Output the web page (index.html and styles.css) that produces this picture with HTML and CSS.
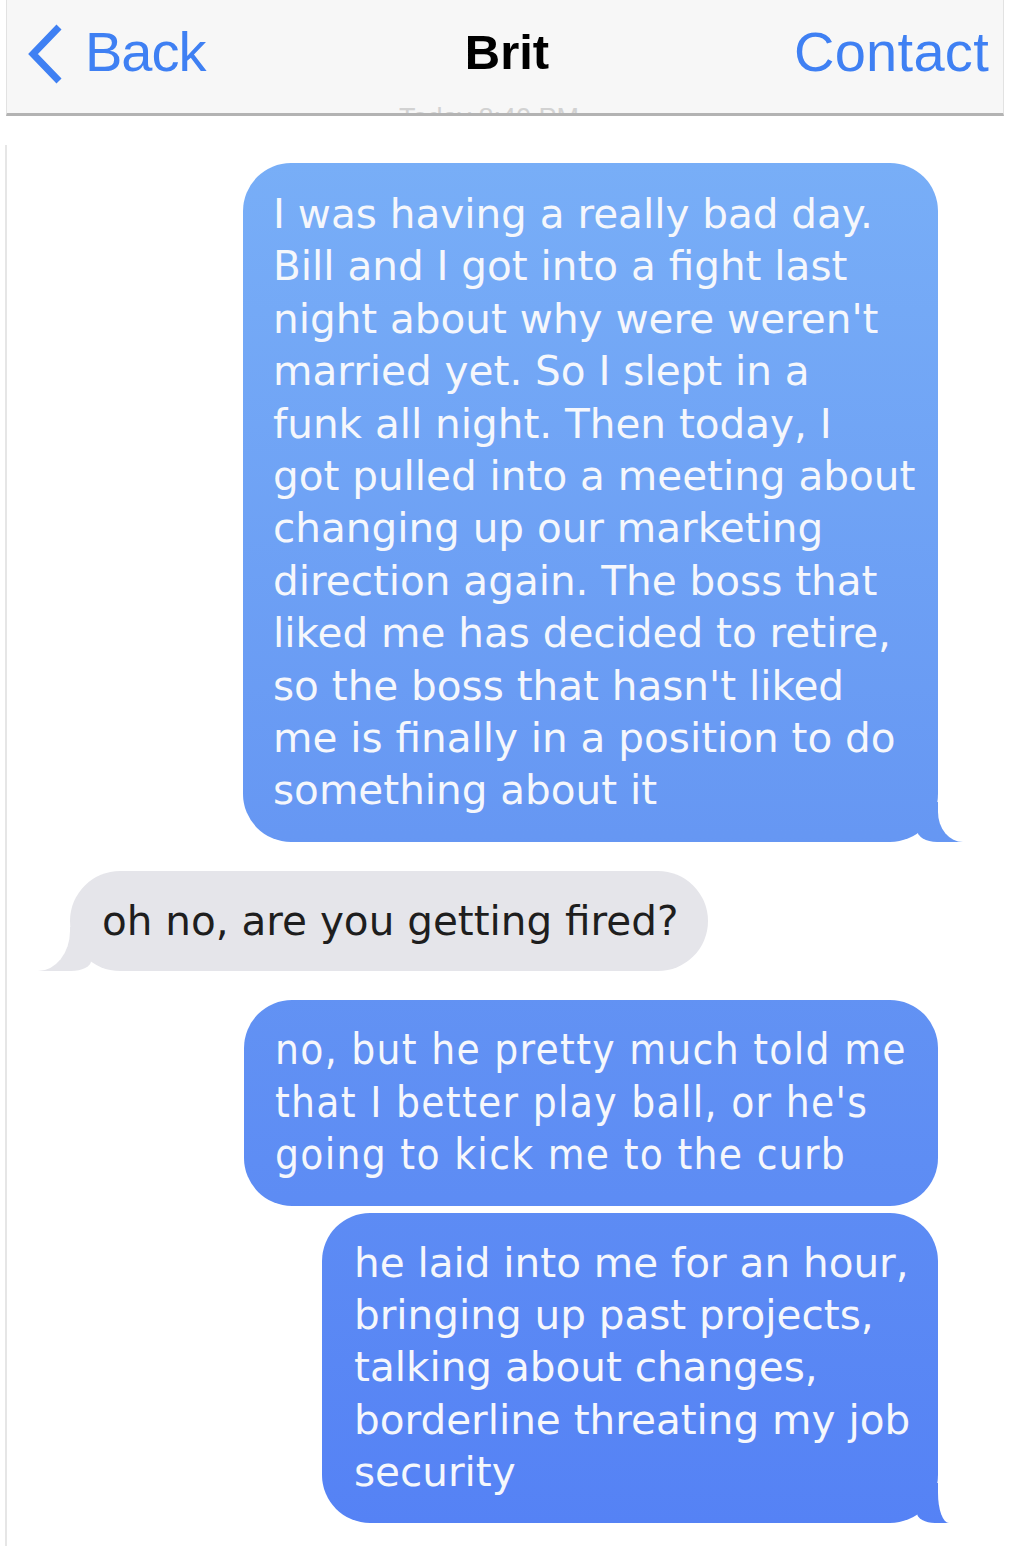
FILE: index.html
```html
<!DOCTYPE html>
<html lang="en">
<head>
    <meta charset="UTF-8">
    <meta name="viewport" content="width=device-width, initial-scale=1.0">
    <title>Brit</title>
    <link rel="stylesheet" href="styles.css">
</head>
<body>
    <div class="phone">
        <div class="nav">
            <a class="back" href="#">
                <svg class="chev" viewBox="0 0 40 62" width="40" height="62">
                    <polyline points="34,4 8,31 34,58" fill="none" stroke="currentColor" stroke-width="7" stroke-linejoin="miter"/>
                </svg>
                <span>Back</span>
            </a>
            <div class="title">Brit</div>
            <a class="contact" href="#">Contact</a>
            <div class="stamp"><span>Today 8:40 PM</span></div>
        </div>

        <div class="thread">
            <div class="msg me tail w1">
                I was having a really bad day.<br>
                Bill and I got into a fight last<br>
                night about why were weren't<br>
                married yet. So I slept in a<br>
                funk all night. Then today, I<br>
                got pulled into a meeting about<br>
                changing up our marketing<br>
                direction again. The boss that<br>
                liked me has decided to retire,<br>
                so the boss that hasn't liked<br>
                me is finally in a position to do<br>
                something about it
            </div>

            <div class="msg them tail w2">oh no, are you getting fired?</div>

            <div class="msg me w3 narrow">
                no, but he pretty much told me<br>
                that I better play ball, or he's<br>
                going to kick me to the curb
            </div>

            <div class="msg me tail small w4 next">
                he laid into me for an hour,<br>
                bringing up past projects,<br>
                talking about changes,<br>
                borderline threating my job<br>
                security
            </div>
        </div>
    </div>
</body>
</html>
```

FILE: styles.css
```css
* {
    box-sizing: border-box;
}

body {
    margin: 0;
    background: white;
    font-family: "DejaVu Sans", Verdana, sans-serif;
    overflow: hidden;
}

.phone {
    width: 999px;
    margin-left: 5px;
    height: 1546px;
}

/* top bar */
.nav {
    position: relative;
    height: 116px;
    margin-left: 1px;
    background: #f7f7f7;
    border-left: 1px solid #e2e2e2;
    border-right: 1px solid #e2e2e2;
    border-bottom: 3px solid #b3b3b3;
    display: grid;
    grid-template-columns: 1fr auto 1fr;
    align-items: center;
    padding: 0 14px 10px 18px;
    font-family: "Liberation Sans", Arial, sans-serif;
}

.nav a {
    color: #3f80f3;
    text-decoration: none;
    font-size: 56px;
}

.back {
    display: flex;
    align-items: center;
    gap: 20px;
    letter-spacing: -1px;
}

.chev {
    display: block;
    margin-top: 4px;
}

.title {
    font-weight: bold;
    font-size: 49px;
    color: #000;
}

.contact {
    justify-self: end;
    letter-spacing: 0.3px;
}

.stamp {
    position: absolute;
    left: 392px;
    bottom: 0;
    height: 8px;
    overflow: hidden;
    font-size: 27px;
    color: #d2d2d2;
    line-height: 1;
}

/* conversation */
.thread {
    margin-top: 29px;
    border-left: 2px solid #e6e6e6;
    padding: 18px 0 0 0;
    height: 1401px;
    display: flex;
    flex-direction: column;
}

.msg {
    position: relative;
    font-size: 40.5px;
    line-height: 52.4px;
    padding: 25px 20px 25px 30px;
    border-radius: 48px;
    white-space: nowrap;
}

.me {
    align-self: flex-end;
    margin-right: 66px;
    color: #f5f7fc;
    background: linear-gradient(#8abaf8 0%, #78aef7 10.5%, #6697f3 54%, #5582f5 98.6%) fixed;
}

.them {
    align-self: flex-start;
    margin-left: 63px;
    margin-top: 29px;
    color: #1e1e1e;
    background: #e5e5ea;
    padding: 24px 20px 24px 32px;
    border-radius: 50px;
}

.w1 { width: 695px; }
.w2 { width: 638px; }
.w3 { width: 694px; margin-top: 29px; }
.w4 { width: 616px; padding-left: 32px; padding-top: 24px; padding-bottom: 24px; }

.next {
    margin-top: 7px;
}

.narrow {
    font-family: "DejaVu Sans Condensed", "DejaVu Sans", sans-serif;
    font-stretch: condensed;
    font-size: 42px;
    letter-spacing: 1.3px;
    padding: 24px 20px 24px 31px;
}

/* bubble tails */
.tail::before,
.tail::after {
    content: "";
    position: absolute;
    bottom: 0;
}

.me.tail::before {
    right: -25px;
    width: 46px;
    height: 40px;
    background: inherit;
    border-bottom-left-radius: 20px 12px;
}

.me.tail::after {
    right: -40px;
    width: 40px;
    height: 40px;
    background: white;
    border-bottom-left-radius: 25px 30px;
}

.me.tail.small::before {
    right: -11px;
    width: 32px;
    border-bottom-left-radius: 18px 10px;
}

.me.tail.small::after {
    right: -26px;
    width: 26px;
    border-bottom-left-radius: 11px 30px;
}

.them.tail::before {
    left: -33px;
    width: 54px;
    height: 44px;
    background: #e5e5ea;
    border-bottom-right-radius: 20px 10px;
}

.them.tail::after {
    left: -50px;
    width: 50px;
    height: 46px;
    background: white;
    border-bottom-right-radius: 32px 40px;
}
```
